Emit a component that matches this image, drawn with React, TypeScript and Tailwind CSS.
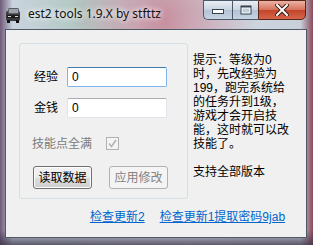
import React from 'react';

const TruckIcon: React.FC = () => (
  <svg width="17" height="16" viewBox="0 0 17 16">
    <rect x="1" y="4" width="14" height="10" rx="2" fill="#3a3a3a" />
    <rect x="3" y="1" width="11" height="6" rx="1.5" fill="#5a5e63" />
    <rect x="4" y="2" width="9" height="4" fill="#9aa3ab" />
    <rect x="2" y="8" width="12" height="3" fill="#1c1c1c" />
    <rect x="3" y="9" width="3" height="1" fill="#d8d8d8" />
    <rect x="10" y="9" width="3" height="1" fill="#d8d8d8" />
    <rect x="2" y="13" width="3" height="3" fill="#111" />
    <rect x="11" y="13" width="3" height="3" fill="#111" />
  </svg>
);

const CaptionButtons: React.FC = () => (
  <div className="flex h-[20px] ml-auto mr-[7px]">
    <div className="w-[29px] h-full border border-[#4a5868] border-r-0 rounded-bl-[5px] bg-[linear-gradient(#e9eef4,#c8d4e1_50%,#b3c3d5_51%,#c6d3e2)] flex items-center justify-center">
      <svg width="12" height="6" viewBox="0 0 12 6" className="mt-[4px]">
        <rect x="0.5" y="0.5" width="11" height="4" fill="#fff" stroke="#34414f" />
      </svg>
    </div>
    <div className="w-[26px] h-full border border-[#4a5868] border-r-0 bg-[linear-gradient(#e9eef4,#c8d4e1_50%,#b3c3d5_51%,#c6d3e2)] flex items-center justify-center">
      <svg width="12" height="10" viewBox="0 0 12 10">
        <rect x="0.5" y="0.5" width="11" height="9" fill="#34414f" />
        <rect x="2" y="3" width="8" height="5" fill="#c0cddb" stroke="#fff" strokeWidth="1" />
      </svg>
    </div>
    <div className="w-[48px] h-full border border-[#5a2418] rounded-br-[5px] bg-[linear-gradient(#eab3a4,#d5705a_50%,#c2452b_51%,#d6664a)] flex items-center justify-center">
      <svg width="14" height="12" viewBox="0 0 14 12">
        <path d="M2 1 L12 11 M12 1 L2 11" stroke="#3a1a14" strokeWidth="4" strokeLinecap="square" />
        <path d="M2 1 L12 11 M12 1 L2 11" stroke="#fff" strokeWidth="2" strokeLinecap="square" />
      </svg>
    </div>
  </div>
);

const TextField: React.FC<{ label: string; focused?: boolean }> = ({ label, focused }) => (
  <div className="flex items-center h-[20px]">
    <span className="ml-[2px] w-[33px] text-black">{label}</span>
    <div
      className={
        focused
          ? 'w-[100px] h-[20px] bg-white border border-[#7eb4ea] border-t-[#3d7bad] rounded-[2px] pl-[4px] leading-[18px] text-black'
          : 'w-[100px] h-[20px] bg-white border border-[#e2e3ea] border-t-[#abadb3] rounded-[2px] pl-[4px] leading-[18px] text-black'
      }
    >
      0
    </div>
  </div>
);

const App: React.FC = () => (
  <div className="w-[313px] h-[245px] overflow-hidden flex flex-col bg-[linear-gradient(to_bottom,transparent_94%,rgba(55,48,70,0.75)),radial-gradient(ellipse_30%_40%_at_52%_8%,rgba(190,80,100,0.55),transparent),radial-gradient(ellipse_20%_30%_at_25%_5%,rgba(120,170,130,0.35),transparent),linear-gradient(to_right,#6f5a78,#c9d3de_4%,#d3dbe4_60%,#c8d0da_96%,#8a4a5a)] font-['Liberation_Sans','Noto_Sans_CJK_SC',sans-serif] text-[12px]">
    <div className="h-[29px] flex items-start shrink-0">
      <div className="ml-[5px] mt-[7px]">
        <TruckIcon />
      </div>
      <span className="ml-[6px] mt-[6px] leading-[16px] text-[12px] text-[#111] font-['Noto_Sans',sans-serif] [text-shadow:0_0_6px_#fff,0_0_6px_#fff]">
        est2 tools 1.9.X by stfttz
      </span>
      <CaptionButtons />
    </div>

    <div className="ml-[5px] w-[302px] h-[209px] shrink-0 border border-[#4f5a66] bg-[#f0f0f0] flex flex-col">
      <div className="flex pl-[13px] pt-[13px]">
        <div className="w-[169px] h-[156px] border border-[#d5dfe5] rounded-[3px] pl-[12px] pt-[23px] flex flex-col">
          <div className="flex flex-col gap-[11px]">
            <TextField label="经验" focused />
            <TextField label="金钱" />
          </div>
          <div className="flex items-center h-[13px] mt-[19px] gap-[14px]">
            <span className="text-[#7a7a7a]">技能点全满</span>
            <div className="w-[13px] h-[13px] border border-[#b1b1b1] bg-[#f4f4f4] flex items-center justify-center">
              <svg width="9" height="9" viewBox="0 0 9 9">
                <path d="M1 4.5 L3.5 7.5 L8 1" stroke="#b4b4b4" strokeWidth="1.6" fill="none" />
              </svg>
            </div>
          </div>
          <div className="flex mt-[16px] ml-[1px] gap-[17px]">
            <div className="w-[59px] h-[23px] border border-[#707070] rounded-[3px] bg-[linear-gradient(#f2f2f2,#ebebeb_50%,#dddddd_51%,#cfcfcf)] shadow-[inset_0_0_0_1px_#fcfcfc] flex items-center justify-center text-black">
              读取数据
            </div>
            <div className="w-[59px] h-[23px] border border-[#adb2b5] rounded-[3px] bg-[#f4f4f4] flex items-center justify-center text-[#838383]">
              应用修改
            </div>
          </div>
        </div>
        <div className="ml-[5px] mt-[10px] leading-[14px] text-black">
          提示：等级为0
          <br />
          时，先改经验为
          <br />
          199，跑完系统给
          <br />
          的任务升到1级，
          <br />
          游戏才会开启技
          <br />
          能，这时就可以改
          <br />
          技能了。
          <br />
          <br />
          支持全部版本
        </div>
      </div>
      <div className="flex pl-[84px] mt-[11px] gap-[15px] leading-[14px]">
        <span className="text-[#0066cc] underline">检查更新2</span>
        <span className="text-[#0066cc] underline">检查更新1提取密码9jab</span>
      </div>
    </div>
  </div>
);

export default App;
